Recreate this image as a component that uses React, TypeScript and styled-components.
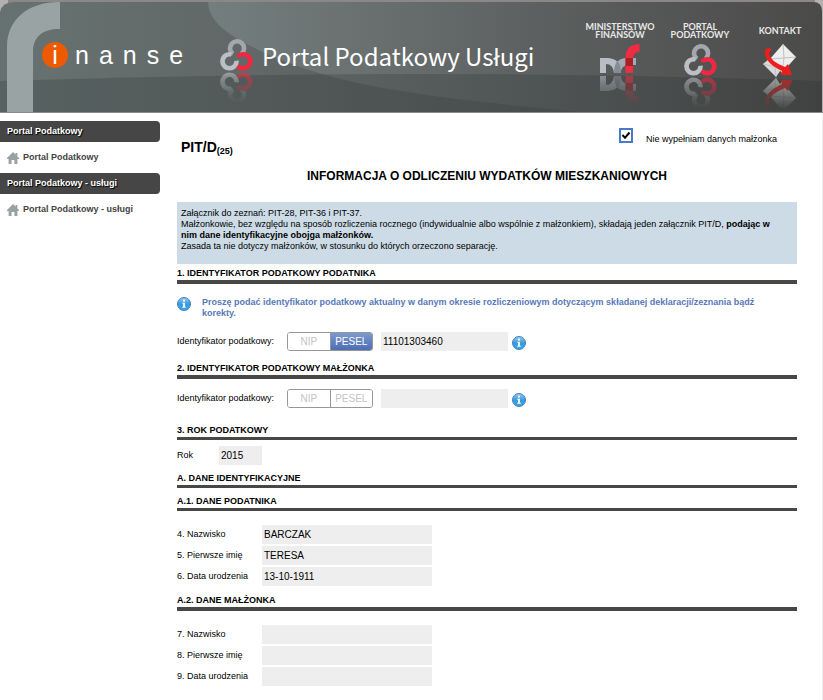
import React, { useId, useState } from 'react';
import styled, { createGlobalStyle } from 'styled-components';

const GlobalStyle = createGlobalStyle`
  * { box-sizing: border-box; }
  body {
    margin: 0;
    background: #fff;
    color: #000;
    font: 9px/11px "Liberation Sans", Arial, sans-serif;
  }
  button, input { font: inherit; }
`;

const Page = styled.div`
  min-height: 100vh;
  border-right: 1px solid #f1f1f1;
`;

const Header = styled.header`
  position: relative;
  height: 113px;
  display: flex;
  align-items: flex-start;
  margin-right: -1px;
  overflow: hidden;
`;

const Backdrop = styled.svg`
  position: absolute;
  inset: 0;
  width: 100%;
  height: 100%;
`;

const Brand = styled.a`
  position: relative;
  display: flex;
  align-items: flex-start;
  flex: none;
  width: 220px;
  color: #fff;
  text-decoration: none;
`;

const BrandMark = styled.svg`
  flex: none;
  width: 60px;
  height: 112px;
`;

const BrandName = styled.span`
  display: flex;
  align-items: center;
  margin: 42px 0 0 -18px;
  font-size: 25px;
  line-height: 26px;
  letter-spacing: 10px;
  white-space: nowrap;
`;

const Dot = styled.span`
  width: 26px;
  height: 26px;
  margin-right: 7px;
  border-radius: 50%;
  background: #ee5a00;
  text-align: center;
  letter-spacing: 0;
`;

const Product = styled.a`
  position: relative;
  display: flex;
  align-items: flex-start;
  flex: 1;
  gap: 9px;
  padding-top: 39px;
  color: #fff;
  text-decoration: none;
`;

const ProductName = styled.span`
  font: 24px/34px "Noto Sans CJK JP", "Noto Sans", sans-serif;
  white-space: nowrap;
`;

const HeaderNav = styled.nav`
  position: relative;
  display: flex;
  flex: none;
  gap: 12px;
  padding: 21px 8px 0 0;
`;

const NavItem = styled.a<{ $width: number }>`
  display: flex;
  flex-direction: column;
  align-items: center;
  width: ${(p) => p.$width}px;
  color: #e8e8e8;
  text-decoration: none;
`;

const NavLabel = styled.span`
  display: flex;
  align-items: center;
  height: 19px;
  margin-bottom: 4px;
  font: bold 9px/8px Lato, "Liberation Sans", sans-serif;
  text-align: center;
  white-space: pre-line;
`;

const Columns = styled.div`
  display: flex;
  align-items: flex-start;
  gap: 17px;
  padding: 8px 25px 12px 0;
`;

const Sidebar = styled.aside`
  flex: none;
  width: 160px;
`;

const MenuHeading = styled.h2`
  margin: 0;
  padding-left: 7px;
  border-radius: 0 4px 4px 0;
  background: #474646;
  color: #fff;
  font-size: 9px;
  line-height: 21px;
  text-shadow: 1px 1px 1px #000;
`;

const MenuLink = styled.a`
  display: flex;
  align-items: center;
  gap: 4px;
  height: 31px;
  padding-left: 7px;
  color: #444;
  font-weight: bold;
  text-decoration: none;
`;

const Main = styled.main`
  flex: 1;
  min-width: 0;
`;

const TopRow = styled.div`
  display: flex;
  justify-content: space-between;
  padding: 7px 20px 0 4px;
`;

const FormCode = styled.h1`
  margin: 11px 0 0;
  font-size: 14px;
  line-height: 16px;
`;

const FormVersion = styled.small`
  position: relative;
  top: 2px;
  font-size: 9px;
`;

const CheckLabel = styled.label`
  display: flex;
  align-items: flex-start;
  gap: 13px;
  line-height: 22px;
`;

const CheckBox = styled.span`
  display: grid;
  width: 14px;
  height: 15px;

  > * { grid-area: 1 / 1; }
  > svg { pointer-events: none; width: 14px; height: 15px; }
  > input:not(:checked) + svg { visibility: hidden; }
`;

const CheckInput = styled.input`
  appearance: none;
  width: 14px;
  height: 15px;
  margin: 0;
  border: 2px solid #4a7ac7;
  background: #fff;
`;

const FormTitle = styled.h2`
  margin: 12px 0 19px;
  font-size: 12px;
  line-height: 14px;
  text-align: center;
`;

const Notice = styled.p`
  margin: 0 0 4px;
  padding: 6px 4px 12px;
  background: #cddbe6;
`;

const SectionHeading = styled.h3<{ $rule: number; $below: number }>`
  margin: 0 0 ${(p) => p.$below}px;
  padding-bottom: 1px;
  border-bottom: ${(p) => p.$rule}px solid #474746;
  font-size: 9px;
  line-height: 11px;
`;

const Hint = styled.p`
  display: flex;
  gap: 11px;
  margin: 0 0 13px;
  color: #5878b8;
  font-weight: bold;

  > svg { flex: none; }
`;

const Row = styled.div<{ $below: number }>`
  display: flex;
  align-items: center;
  margin-bottom: ${(p) => p.$below}px;
`;

const FieldLabel = styled.label<{ $width: number }>`
  flex: none;
  width: ${(p) => p.$width}px;
`;

const Field = styled.input<{ $width: number }>`
  width: ${(p) => p.$width}px;
  height: 19px;
  margin: 0;
  padding: 0 2px 1px;
  border: 0;
  border-radius: 0;
  background: #eee;
  color: #000;
  font-size: 10px;
`;

const Toggle = styled.div`
  display: flex;
  width: 86px;
  height: 19px;
  margin-right: 8px;
  overflow: hidden;
  border: 1px solid #979797;
  border-radius: 3px;
`;

const ToggleButton = styled.button<{ $on: boolean }>`
  flex: 1;
  padding: 0;
  border: 0;
  background: ${(p) => (p.$on ? 'linear-gradient(#7d99cf, #4b6db3)' : '#fff')};
  color: ${(p) => (p.$on ? '#fff' : '#c4c4c4')};
  font-size: 10px;

  & + & { border-left: 1px solid #979797; }
`;

const InfoButton = styled.button`
  display: flex;
  margin: 3px 0 0 4px;
  padding: 0;
  border: 0;
  background: none;
`;

function InfoIcon() {
  const id = useId();
  return (
    <svg width="14" height="14" viewBox="0 0 14 14" aria-hidden="true">
      <linearGradient id={id} x2="0" y2="1">
        <stop stopColor="#9ccbed" />
        <stop offset=".5" stopColor="#3b9ade" />
        <stop offset="1" stopColor="#3aa6ea" />
      </linearGradient>
      <circle cx="7" cy="7" r="6.5" fill={`url(#${id})`} stroke="#3f83bd" />
      <circle cx="7" cy="3.7" r="1.1" fill="#fff" />
      <path d="M5.3 5.8h2.6v4h.9v1H5.2v-1h.9V6.8h-.8z" fill="#fff" />
    </svg>
  );
}

function HomeIcon() {
  return (
    <svg width="12" height="12" viewBox="0 0 12 12" fill="#99a2a2" aria-hidden="true">
      <path d="M6 0 0 6v1h1.6v5h3V8h2.8v4h3V7H12V6L10.400 4.400V1H8.600v1.600z" />
    </svg>
  );
}

function Reflected({ width, height, children }: { width: number; height: number; children: React.ReactNode }) {
  const id = useId();
  return (
    <svg width={width} height={height * 2 + 3} viewBox={`0 0 ${width} ${height * 2 + 3}`} aria-hidden="true">
      <linearGradient id={`${id}g`} x2="0" y2="1">
        <stop stopColor="#fff" stopOpacity=".6" />
        <stop offset=".95" stopColor="#fff" stopOpacity="0" />
      </linearGradient>
      <mask id={`${id}m`} maskUnits="userSpaceOnUse" x="0" y={height + 1} width={width} height={height}>
        <rect y={height + 1} width={width} height={height} fill={`url(#${id}g)`} />
      </mask>
      <g>{children}</g>
      <g mask={`url(#${id}m)`}>
        <g transform={`translate(0 ${height * 2 + 1}) scale(1 -1)`}>{children}</g>
      </g>
    </svg>
  );
}

function Trefoil() {
  return (
    <Reflected width={33} height={32}>
      <g fill="none" strokeWidth="4.6">
        <path d="M13 15A7 7 0 1 1 21.500 14.700" stroke="#a3a8af" />
        <path d="M11.300 15.500A7 7 0 1 0 16.500 21.700" stroke="#bcbfc5" />
        <path d="M17.900 17.800A7 7 0 1 1 17.900 26.800" stroke="#f0283f" />
      </g>
    </Reflected>
  );
}

function MinistryLogo() {
  return (
    <Reflected width={40} height={30}>
      <path d="M0 14H8Q21 15 21 29H14Q13 20 6 20V29H0z" fill="#b8bdc6" />
      <path d="M14 29Q14 14 27 14H36V21H29Q21 21 21 29z" fill="#a2a9b2" />
      <path d="M14 29Q14 21 17.500 17 21 21 21 29z" fill="#858c95" />
      <path d="M25.500 29V14Q25.500 0 39.500 0v8q-6.500 0-6.500 7v14z" fill="#ef2d42" />
      <path d="M25.500 14H33v8h-7.500z" fill="#a91f26" />
    </Reflected>
  );
}

function ContactIcon() {
  return (
    <Reflected width={34} height={33}>
      <path d="M6 15 19 24 13 33 0 20z" fill="#d9d9d9" />
      <path d="M20 0 33 13 19 29 7 15z" fill="#eee" />
      <path d="M20 0 21 14 33 13" fill="none" stroke="#b5b5b5" strokeWidth=".8" />
      <path d="M21 14 19 28M7 15 21 14M0 20 12 23 13 33" fill="none" stroke="#bbb" strokeWidth=".8" />
      <path d="M9 6Q6 2 2 6 0 18 19 27L18 31 29 31 25 20 22 23Q7 17 6 10 6 7 9 6z" fill="#ee1d1d" />
    </Reflected>
  );
}

function HeaderBackdrop() {
  return (
    <Backdrop viewBox="0 0 823 113" preserveAspectRatio="none" aria-hidden="true">
      <linearGradient id="base" x1="0" x2="1">
        <stop stopColor="#667271" />
        <stop offset=".3" stopColor="#616867" />
        <stop offset=".65" stopColor="#555757" />
        <stop offset="1" stopColor="#4a4a49" />
      </linearGradient>
      <linearGradient id="lens" x1="0" x2="1">
        <stop stopColor="#8a9a9a" stopOpacity=".42" />
        <stop offset=".6" stopColor="#808585" stopOpacity=".16" />
        <stop offset="1" stopColor="#777" stopOpacity="0" />
      </linearGradient>
      <rect width="823" height="113" fill="#b5b0b0" />
      <rect x="8" width="807" height="3" fill="#8b8786" />
      <path d="M0 12Q2 2 14 2H813Q822 2 822 11V113H0z" fill="url(#base)" />
      <path d="M208 2C209 27 240 41 267 54 345 89 440 98 580 112H822V11Q822 2 813 2z" fill="url(#lens)" />
      <path d="M0 81Q220 74 420 74T822 81V112H0z" fill="#202828" fillOpacity=".22" />
      <rect y="112" width="823" height="1" fill="#8a8c8c" />
    </Backdrop>
  );
}

function TaxIdRow({ id, value, selected, below }: { id: string; value: string; selected?: string; below: number }) {
  const [kind, setKind] = useState(selected);
  return (
    <Row $below={below}>
      <FieldLabel htmlFor={id} $width={110}>Identyfikator podatkowy:</FieldLabel>
      <Toggle role="group" aria-label="Rodzaj identyfikatora">
        {['NIP', 'PESEL'].map((name) => (
          <ToggleButton key={name} type="button" $on={kind === name} aria-pressed={kind === name} onClick={() => setKind(name)}>
            {name}
          </ToggleButton>
        ))}
      </Toggle>
      <Field id={id} $width={127} defaultValue={value} />
      <InfoButton type="button" aria-label="Informacja"><InfoIcon /></InfoButton>
    </Row>
  );
}

function PersonRows({ prefix, rows }: { prefix: string; rows: [string, string][] }) {
  return (
    <>
      {rows.map(([label, value], i) => (
        <Row key={label} $below={i === rows.length - 1 ? 9 : 2}>
          <FieldLabel htmlFor={prefix + i} $width={85}>{label}</FieldLabel>
          <Field id={prefix + i} $width={170} defaultValue={value} />
        </Row>
      ))}
    </>
  );
}

export default function App() {
  return (
    <Page>
      <GlobalStyle />
      <Header>
        <HeaderBackdrop />
        <Brand href="#">
          <BrandMark viewBox="0 0 60 112" aria-hidden="true">
            <path d="M7 112V47C7 20 27 2 60 2V29C42 29 33 37 33 52V112Z" fill="#9aa3a3" />
          </BrandMark>
          <BrandName><Dot>i</Dot>nanse</BrandName>
        </Brand>
        <Product href="#">
          <Trefoil />
          <ProductName>Portal Podatkowy Usługi</ProductName>
        </Product>
        <HeaderNav>
          <NavItem href="#" $width={70}><NavLabel>{'MINISTERSTWO\nFINANSÓW'}</NavLabel><MinistryLogo /></NavItem>
          <NavItem href="#" $width={66}><NavLabel>{'PORTAL\nPODATKOWY'}</NavLabel><Trefoil /></NavItem>
          <NavItem href="#" $width={70}><NavLabel>KONTAKT</NavLabel><ContactIcon /></NavItem>
        </HeaderNav>
      </Header>
      <Columns>
        <Sidebar>
          <MenuHeading>Portal Podatkowy</MenuHeading>
          <MenuLink href="#"><HomeIcon />Portal Podatkowy</MenuLink>
          <MenuHeading>Portal Podatkowy - usługi</MenuHeading>
          <MenuLink href="#"><HomeIcon />Portal Podatkowy - usługi</MenuLink>
        </Sidebar>
        <Main>
          <TopRow>
            <FormCode>PIT/D<FormVersion>(25)</FormVersion></FormCode>
            <CheckLabel>
              <CheckBox>
                <CheckInput type="checkbox" defaultChecked />
                <svg viewBox="0 0 14 15" aria-hidden="true">
                  <path d="M3.500 7 6 9.800 10.500 4.500" fill="none" stroke="#000" strokeWidth="2" />
                </svg>
              </CheckBox>
              Nie wypełniam danych małżonka
            </CheckLabel>
          </TopRow>
          <FormTitle>INFORMACJA O ODLICZENIU WYDATKÓW MIESZKANIOWYCH</FormTitle>
          <Notice>
            Załącznik do zeznań: PIT-28, PIT-36 i PIT-37.<br />
            Małżonkowie, bez względu na sposób rozliczenia rocznego (indywidualnie albo wspólnie z małżonkiem), składają jeden załącznik PIT/D, <b>podając w<br />nim dane identyfikacyjne obojga małżonków.</b><br />
            Zasada ta nie dotyczy małżonków, w stosunku do których orzeczono separację.
          </Notice>
          <SectionHeading $rule={4} $below={13}>1. IDENTYFIKATOR PODATKOWY PODATNIKA</SectionHeading>
          <Hint>
            <InfoIcon />
            <span>Proszę podać identyfikator podatkowy aktualny w danym okresie rozliczeniowym dotyczącym składanej deklaracji/zeznania bądź<br />korekty.</span>
          </Hint>
          <TaxIdRow id="taxpayer" value="11101303460" selected="PESEL" below={12} />
          <SectionHeading $rule={4} $below={10}>2. IDENTYFIKATOR PODATKOWY MAŁŻONKA</SectionHeading>
          <TaxIdRow id="spouse" value="" below={17} />
          <SectionHeading $rule={3} $below={6}>3. ROK PODATKOWY</SectionHeading>
          <Row $below={8}>
            <FieldLabel htmlFor="year" $width={42}>Rok</FieldLabel>
            <Field id="year" $width={43} defaultValue="2015" />
          </Row>
          <SectionHeading $rule={3} $below={8}>A. DANE IDENTYFIKACYJNE</SectionHeading>
          <SectionHeading $rule={3} $below={14}>A.1. DANE PODATNIKA</SectionHeading>
          <PersonRows prefix="a" rows={[['4. Nazwisko', 'BARCZAK'], ['5. Pierwsze imię', 'TERESA'], ['6. Data urodzenia', '13-10-1911']]} />
          <SectionHeading $rule={4} $below={14}>A.2. DANE MAŁŻONKA</SectionHeading>
          <PersonRows prefix="b" rows={[['7. Nazwisko', ''], ['8. Pierwsze imię', ''], ['9. Data urodzenia', '']]} />
        </Main>
      </Columns>
    </Page>
  );
}
